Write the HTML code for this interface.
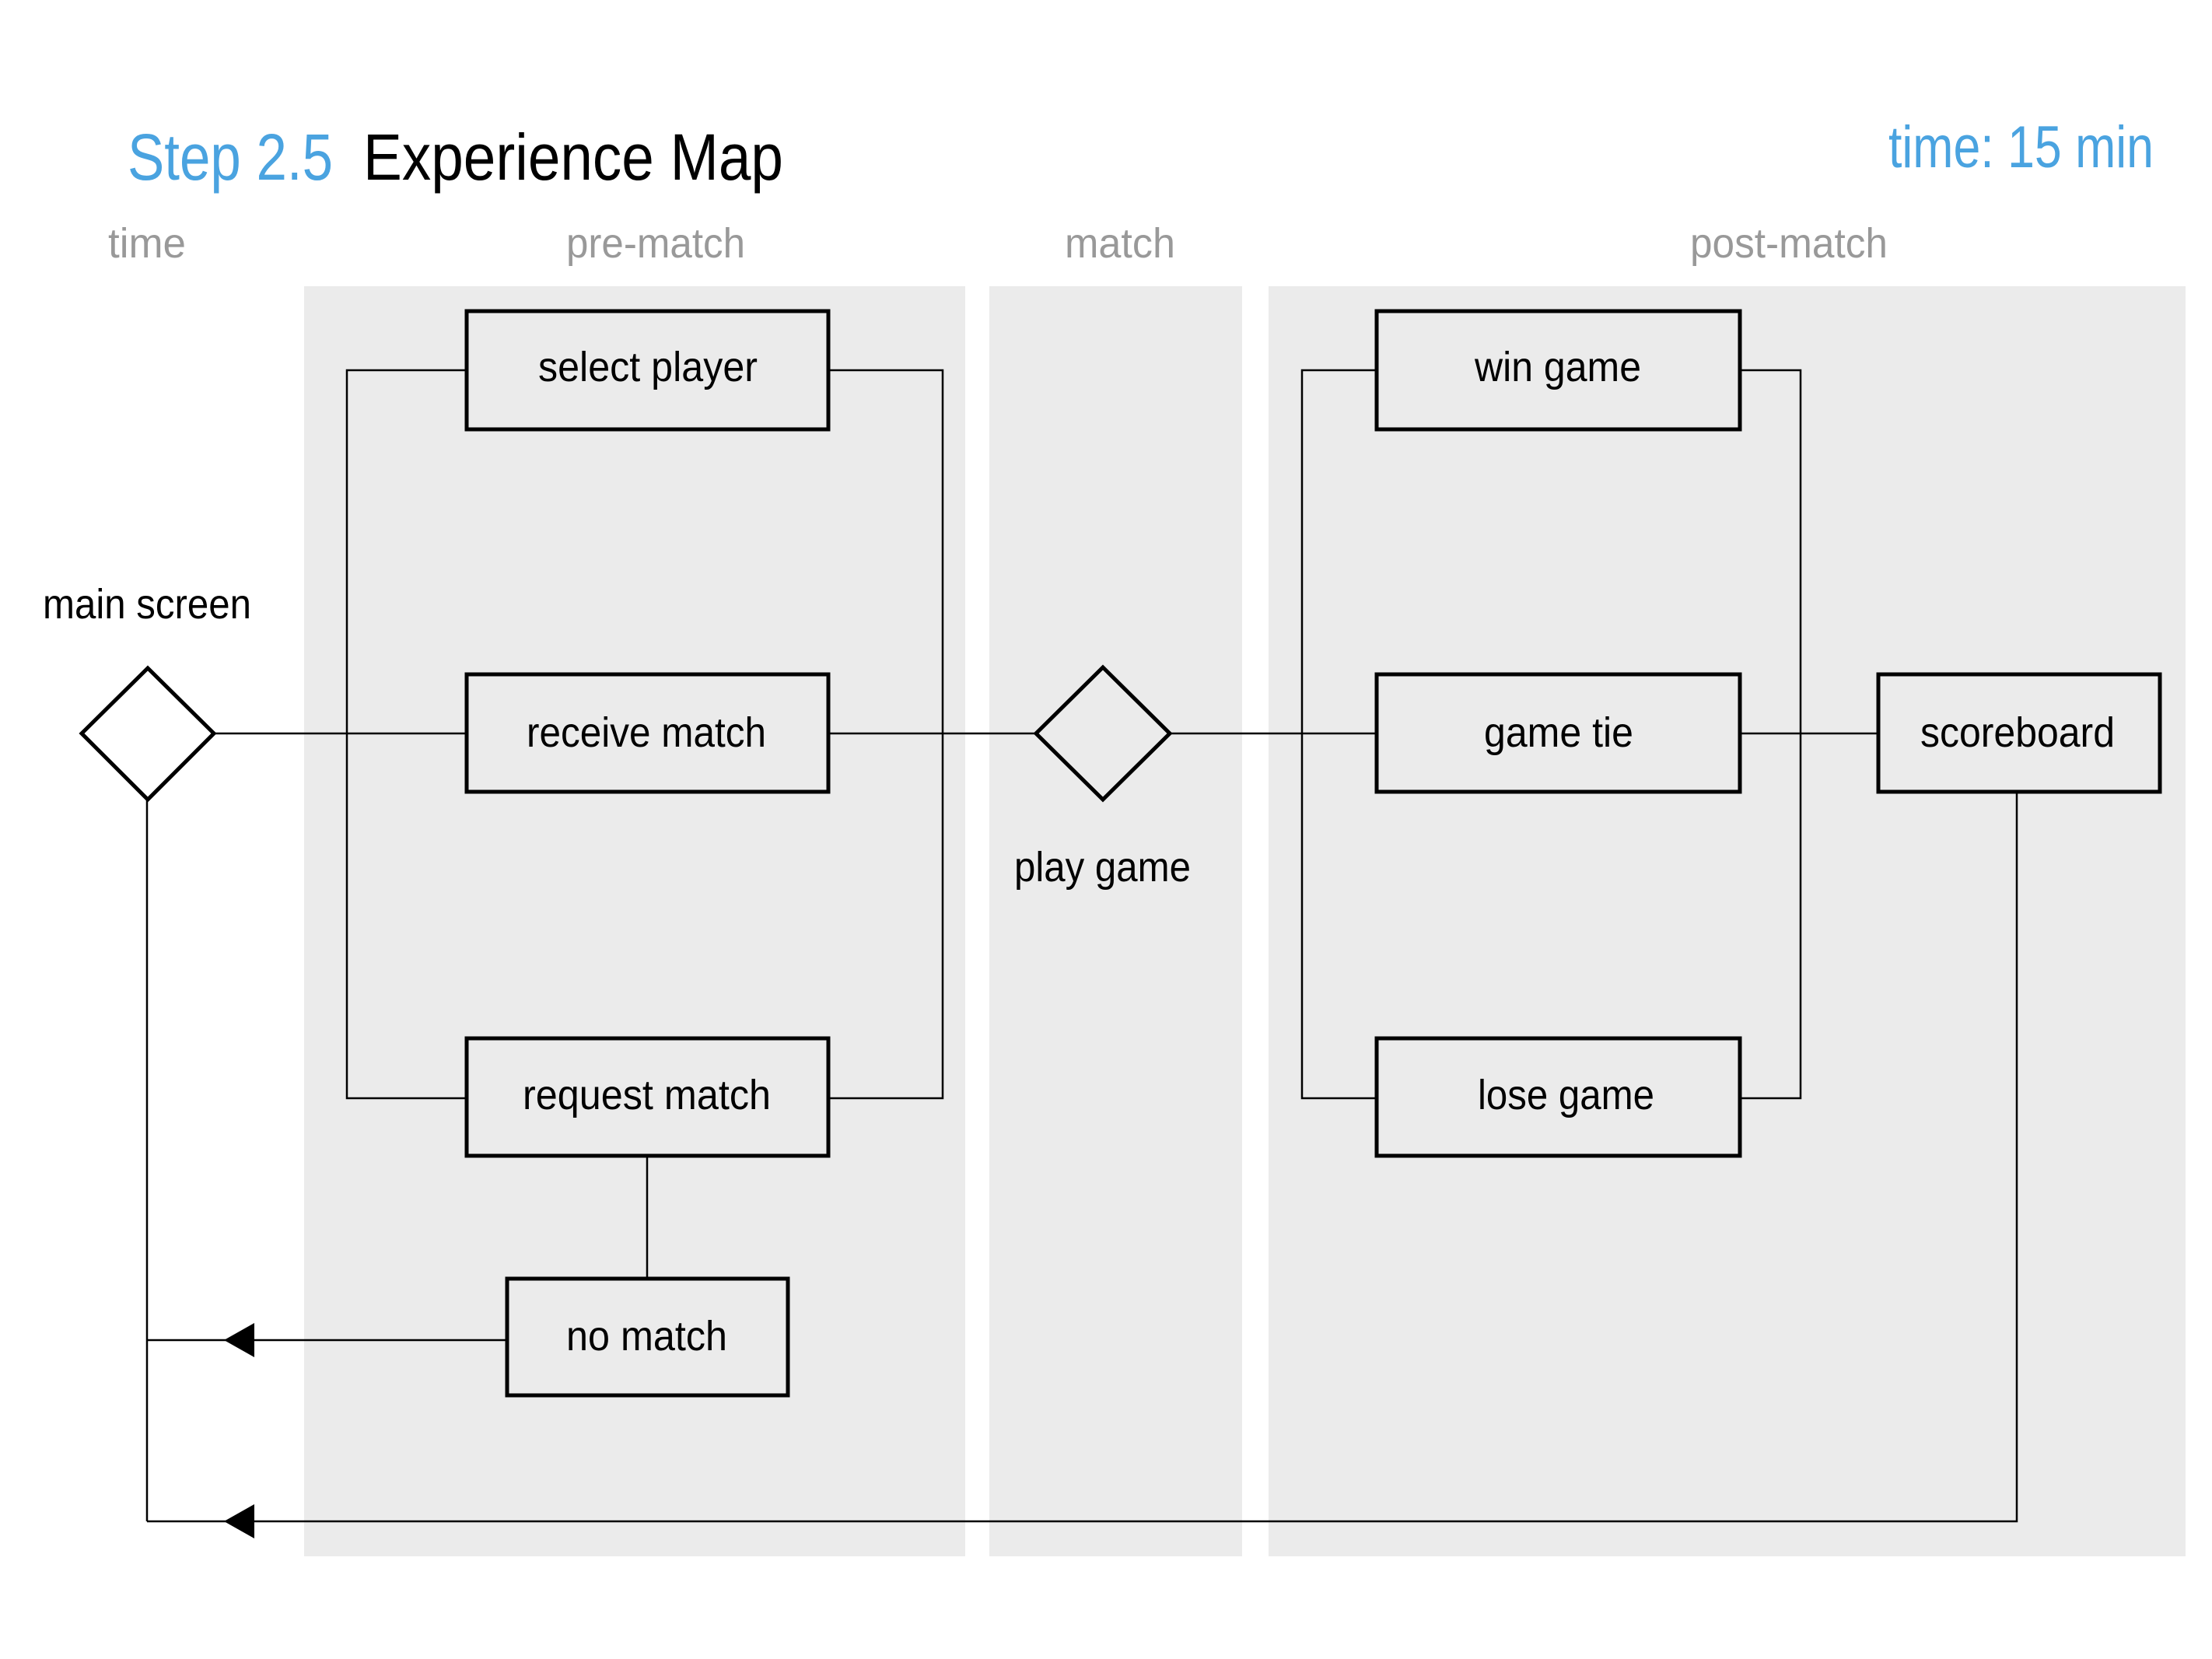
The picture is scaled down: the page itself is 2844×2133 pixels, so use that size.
<!DOCTYPE html>
<html><head><meta charset="utf-8"><style>html,body{margin:0;padding:0;background:#fff}svg{display:block}</style></head>
<body>
<svg width="2844" height="2133" viewBox="0 0 2844 2133" xmlns="http://www.w3.org/2000/svg" font-family="Liberation Sans, sans-serif">
<rect width="2844" height="2133" fill="#fff"/>
<rect x="391" y="368" width="850" height="1633" fill="#ebebeb"/>
<rect x="1272" y="368" width="325" height="1633" fill="#ebebeb"/>
<rect x="1631" y="368" width="1179" height="1633" fill="#ebebeb"/>
<g font-weight="300">
<text x="164" y="231" font-size="84" fill="#4aa3e0" textLength="264" lengthAdjust="spacingAndGlyphs">Step 2.5</text>
<text x="467" y="231" font-size="84" fill="#000" textLength="540" lengthAdjust="spacingAndGlyphs">Experience Map</text>
<text x="2428" y="215" font-size="76" fill="#4aa3e0" textLength="341" lengthAdjust="spacingAndGlyphs">time: 15 min</text>
<g font-size="54" fill="#999">
<text x="139" y="331" textLength="100" lengthAdjust="spacingAndGlyphs">time</text>
<text x="728" y="331" textLength="230" lengthAdjust="spacingAndGlyphs">pre-match</text>
<text x="1369" y="331" textLength="142" lengthAdjust="spacingAndGlyphs">match</text>
<text x="2173" y="331" textLength="254" lengthAdjust="spacingAndGlyphs">post-match</text>
</g>
<g font-size="54" fill="#000">
<text x="55" y="795" textLength="268" lengthAdjust="spacingAndGlyphs">main screen</text>
<text x="692" y="490" textLength="282" lengthAdjust="spacingAndGlyphs">select player</text>
<text x="677" y="960" textLength="308" lengthAdjust="spacingAndGlyphs">receive match</text>
<text x="672" y="1426" textLength="319" lengthAdjust="spacingAndGlyphs">request match</text>
<text x="728" y="1736" textLength="207" lengthAdjust="spacingAndGlyphs">no match</text>
<text x="1304" y="1133" textLength="227" lengthAdjust="spacingAndGlyphs">play game</text>
<text x="1896" y="490" textLength="214" lengthAdjust="spacingAndGlyphs">win game</text>
<text x="1908" y="960" textLength="192" lengthAdjust="spacingAndGlyphs">game tie</text>
<text x="1900" y="1426" textLength="227" lengthAdjust="spacingAndGlyphs">lose game</text>
<text x="2469" y="960" textLength="250" lengthAdjust="spacingAndGlyphs">scoreboard</text>
</g>
</g>
<g stroke="#000" stroke-width="2.5" fill="none">
<line x1="276" y1="943" x2="598" y2="943"/>
<polyline points="598,476 446,476 446,1412 598,1412"/>
<polyline points="1067,476 1212,476 1212,1412 1067,1412"/>
<line x1="1067" y1="943" x2="1332" y2="943"/>
<line x1="1504" y1="943" x2="1768" y2="943"/>
<polyline points="1768,476 1674,476 1674,1412 1768,1412"/>
<polyline points="2239,476 2315,476 2315,1412 2239,1412"/>
<line x1="2239" y1="943" x2="2413" y2="943"/>
<polyline points="2593,1020 2593,1956 189,1956"/>
<line x1="189" y1="1029" x2="189" y2="1956"/>
<line x1="650" y1="1723" x2="189" y2="1723"/>
<line x1="832" y1="1488" x2="832" y2="1642"/>
</g>
<g fill="#000">
<polygon points="288,1723 327,1701 327,1745"/>
<polygon points="288,1956 327,1934 327,1978"/>
</g>
<g stroke="#000" stroke-width="5" fill="none">
<rect x="600" y="400" width="465" height="152"/>
<rect x="600" y="867" width="465" height="151"/>
<rect x="600" y="1335" width="465" height="151"/>
<rect x="652" y="1644" width="361" height="150"/>
<rect x="1770" y="400" width="467" height="152"/>
<rect x="1770" y="867" width="467" height="151"/>
<rect x="1770" y="1335" width="467" height="151"/>
<rect x="2415" y="867" width="362" height="151"/>
<polygon points="190,859 275,943 190,1028 105,943"/>
<polygon points="1418,858 1504,943 1418,1028 1332,943"/>
</g>
</svg>
</body></html>
